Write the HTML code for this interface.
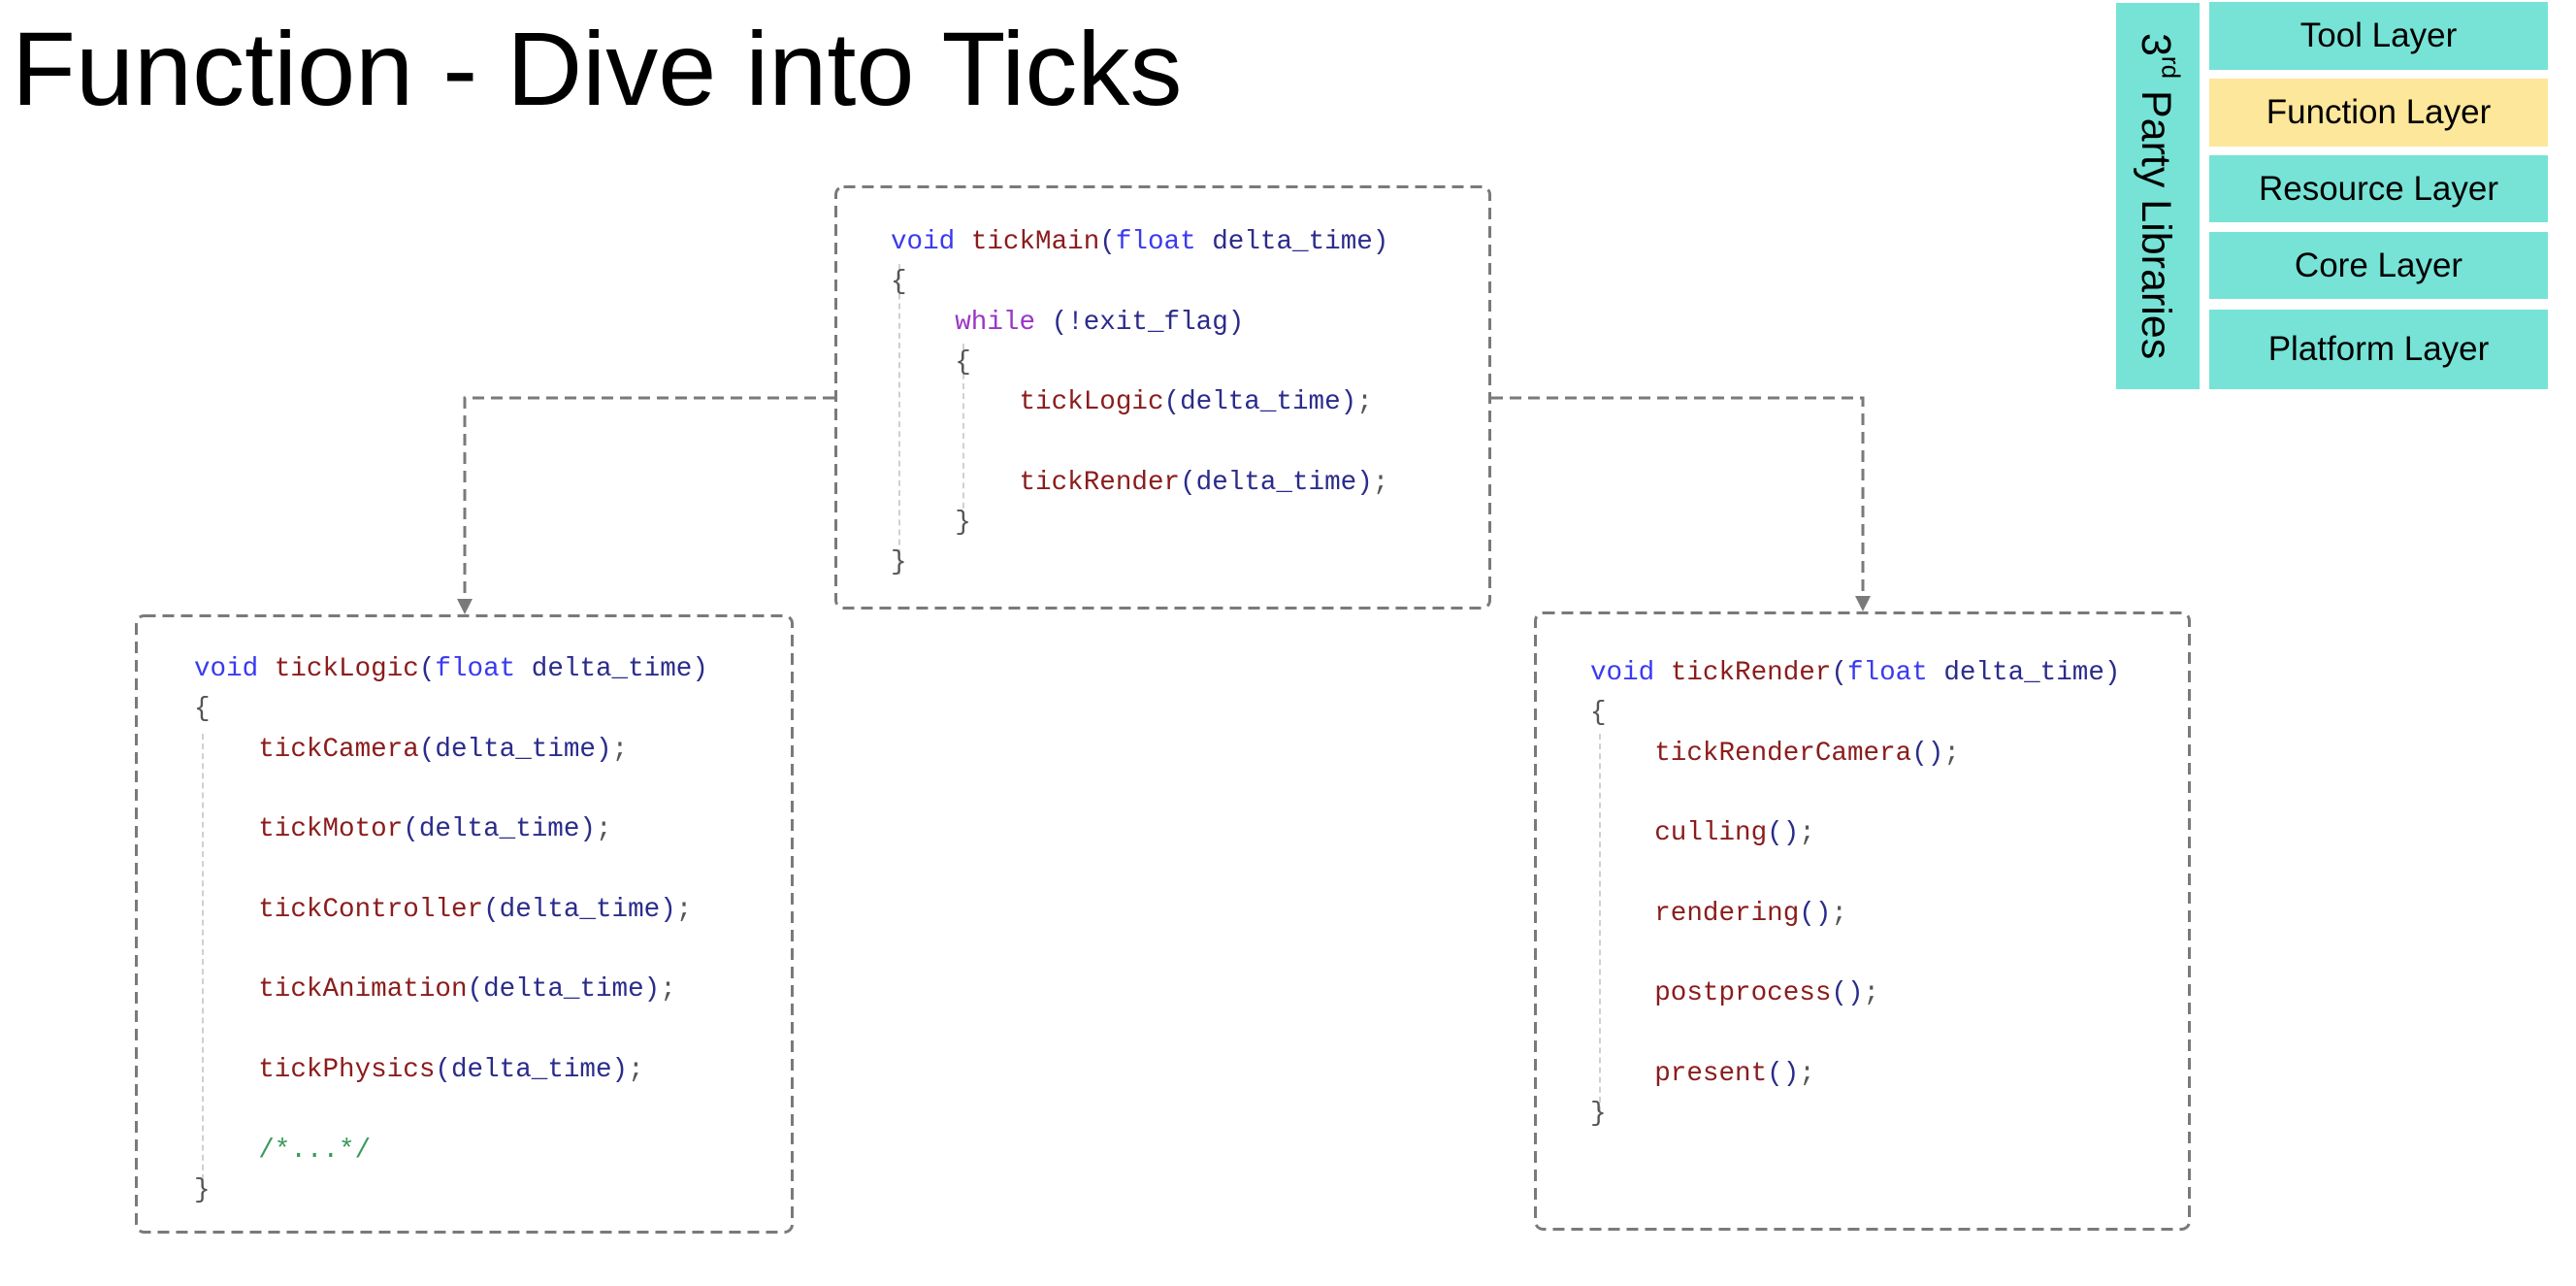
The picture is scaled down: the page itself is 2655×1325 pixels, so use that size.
<!DOCTYPE html>
<html><head><meta charset="utf-8"><style>
html,body{margin:0;padding:0;background:#fff;}
body{width:2655px;height:1325px;position:relative;overflow:hidden;font-family:"Liberation Sans",Arial,sans-serif;}
.title{position:absolute;left:12px;top:11px;font-size:108px;line-height:120px;color:#000;white-space:nowrap;}
.code{position:absolute;font-family:"Liberation Mono",monospace;font-size:27.6px;line-height:41.3px;white-space:pre;color:#333;}
.k{color:#3a3af0}.f{color:#8b1c1c}.a{color:#2b2b8c}.w{color:#9a35c8}.c{color:#3a9a5a}.b{color:#555}
.guide{position:absolute;border-left:2px dashed #d0d0d0;width:0;}
.layer{position:absolute;left:2277px;width:349px;background:#76e3d6;font-size:35px;color:#000;display:flex;align-items:center;justify-content:center;}
.side{position:absolute;left:2181px;top:3px;width:86px;height:398px;background:#76e3d6;}
.sidetxt{position:absolute;left:2197px;top:34px;writing-mode:vertical-rl;font-size:43px;color:#000;white-space:nowrap;}
</style></head><body>
<div class="title">Function - Dive into Ticks</div>

<div class="side"></div>
<div class="sidetxt">3<sup style="font-size:26px">rd</sup> Party Libraries</div>
<div class="layer" style="top:2px;height:70px">Tool Layer</div>
<div class="layer" style="top:81px;height:70px;background:#fde79b">Function Layer</div>
<div class="layer" style="top:160px;height:69px">Resource Layer</div>
<div class="layer" style="top:239px;height:69px">Core Layer</div>
<div class="layer" style="top:319px;height:82px">Platform Layer</div>

<svg style="position:absolute;left:0;top:0" width="2655" height="1325">
<g fill="none" stroke="#7a7a7a" stroke-width="3" stroke-dasharray="12,7">
<path d="M860 410 H479 V620"/>
<path d="M1537 410 H1920 V617"/>
<rect x="861.5" y="192.5" width="674" height="434" rx="8"/>
<rect x="140.5" y="634.5" width="676" height="635" rx="8"/>
<rect x="1582.5" y="631.5" width="674" height="635" rx="8"/>
</g>
<path d="M471 617 L487 617 L479 633 Z" fill="#7a7a7a"/>
<path d="M1912 614 L1928 614 L1920 630 Z" fill="#7a7a7a"/>
</svg>

<div class="guide" style="left:926px;top:272px;height:320px"></div>
<div class="guide" style="left:992px;top:354px;height:180px"></div>
<div class="code" style="left:918px;top:229px"><span class="k">void</span> <span class="f">tickMain</span><span class="a">(</span><span class="k">float</span> <span class="a">delta_time)</span>
<span class="b">{</span>
    <span class="w">while</span> <span class="a">(!exit_flag)</span>
    <span class="b">{</span>
        <span class="f">tickLogic</span><span class="a">(delta_time)</span><span class="b">;</span>

        <span class="f">tickRender</span><span class="a">(delta_time)</span><span class="b">;</span>
    <span class="b">}</span>
<span class="b">}</span></div>

<div class="guide" style="left:208px;top:756px;height:470px"></div>
<div class="code" style="left:200px;top:669px"><span class="k">void</span> <span class="f">tickLogic</span><span class="a">(</span><span class="k">float</span> <span class="a">delta_time)</span>
<span class="b">{</span>
    <span class="f">tickCamera</span><span class="a">(delta_time)</span><span class="b">;</span>

    <span class="f">tickMotor</span><span class="a">(delta_time)</span><span class="b">;</span>

    <span class="f">tickController</span><span class="a">(delta_time)</span><span class="b">;</span>

    <span class="f">tickAnimation</span><span class="a">(delta_time)</span><span class="b">;</span>

    <span class="f">tickPhysics</span><span class="a">(delta_time)</span><span class="b">;</span>

    <span class="c">/*...*/</span>
<span class="b">}</span></div>

<div class="guide" style="left:1648px;top:756px;height:390px"></div>
<div class="code" style="left:1639px;top:673px"><span class="k">void</span> <span class="f">tickRender</span><span class="a">(</span><span class="k">float</span> <span class="a">delta_time)</span>
<span class="b">{</span>
    <span class="f">tickRenderCamera</span><span class="a">()</span><span class="b">;</span>

    <span class="f">culling</span><span class="a">()</span><span class="b">;</span>

    <span class="f">rendering</span><span class="a">()</span><span class="b">;</span>

    <span class="f">postprocess</span><span class="a">()</span><span class="b">;</span>

    <span class="f">present</span><span class="a">()</span><span class="b">;</span>
<span class="b">}</span></div>
</body></html>
